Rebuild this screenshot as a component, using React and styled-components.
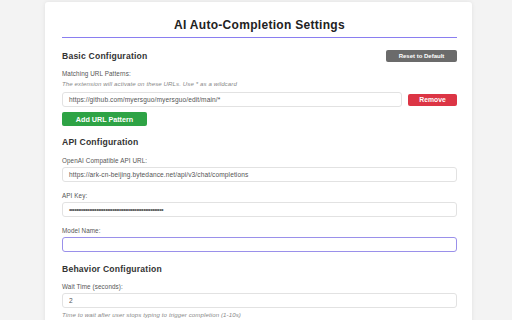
import React from 'react';
import styled, { createGlobalStyle } from 'styled-components';

const GlobalStyle = createGlobalStyle`
  html, body {
    margin: 0;
    padding: 0;
    background: #f3f3f3;
    font-family: "Liberation Sans", Arial, sans-serif;
    overflow: hidden;
  }
`;

const Page = styled.div`
  width: 512px;
  height: 320px;
  overflow: hidden;
  padding-top: 2px;
  box-sizing: border-box;
`;

const Card = styled.div`
  width: 427px;
  margin-left: 45px;
  background: #fff;
  box-shadow: 0 0 4px rgba(0, 0, 0, 0.08);
  border-radius: 3px;
  padding: 16px 15px 20px 17px;
  box-sizing: border-box;
  min-height: 330px;
`;

const Title = styled.h1`
  margin: 0;
  font-size: 12px;
  line-height: 14px;
  font-weight: 700;
  color: #222;
  text-align: center;
  padding-bottom: 5px;
  border-bottom: 1px solid #8a7ef0;
  letter-spacing: 0.3px;
`;

const Section = styled.section`
  margin-top: ${p => p.$top}px;
`;

const SectionHeader = styled.div`
  display: flex;
  align-items: center;
  justify-content: space-between;
  height: 12px;
`;

const Heading = styled.h2`
  margin: 0;
  font-size: 8.6px;
  line-height: 11px;
  font-weight: 700;
  color: #333;
  letter-spacing: 0.2px;
`;

const Label = styled.label`
  display: block;
  font-size: 6.3px;
  line-height: 8px;
  color: #555;
  letter-spacing: 0.1px;
  margin-top: ${p => p.$top}px;
`;

const Help = styled.div`
  font-size: 6.1px;
  line-height: 7px;
  font-style: italic;
  color: #888;
  letter-spacing: 0.1px;
  margin-top: ${p => p.$top || 2}px;
`;

const Row = styled.div`
  display: flex;
  align-items: center;
  gap: 6px;
  margin-top: 5px;
`;

const Input = styled.div`
  flex: 1;
  height: 15px;
  box-sizing: border-box;
  border: 1px solid ${p => (p.$focus ? '#9a90ea' : '#e2e2e2')};
  border-radius: 3px;
  background: #fff;
  display: flex;
  align-items: center;
  padding: 0 6px;
  font-size: 6.6px;
  color: #555;
  margin-top: ${p => p.$top || 0}px;
  white-space: nowrap;
  overflow: hidden;
  letter-spacing: ${p => (p.$dots ? '-0.5px' : '0.1px')};
`;

const Button = styled.button`
  border: none;
  border-radius: 2px;
  color: #fff;
  font-family: "Liberation Sans", Arial, sans-serif;
  font-weight: 700;
  font-size: ${p => p.$size || 6}px;
  padding: 0;
  height: ${p => p.$h}px;
  width: ${p => p.$w}px;
  background: ${p => p.$bg};
  cursor: pointer;
  margin-top: ${p => p.$top || 0}px;
  display: block;
`;

export default function App() {
  return (
    <>
      <GlobalStyle />
      <Page>
        <Card>
          <Title>AI Auto-Completion Settings</Title>

          <Section $top={12}>
            <SectionHeader>
              <Heading>Basic Configuration</Heading>
              <Button $bg="#6b6b6b" $w={71} $h={12} $size={6}>Reset to Default</Button>
            </SectionHeader>
            <Label $top={8}>Matching URL Patterns:</Label>
            <Help>The extension will activate on these URLs. Use * as a wildcard</Help>
            <Row>
              <Input>https://github.com/myersguo/myersguo/edit/main/*</Input>
              <Button $bg="#dc3545" $w={49} $h={12} $size={6.8}>Remove</Button>
            </Row>
            <Button $bg="#2ea345" $w={85} $h={14} $size={7.2} $top={5}>Add URL Pattern</Button>
          </Section>

          <Section $top={11}>
            <Heading>API Configuration</Heading>
            <Label $top={9}>OpenAI Compatible API URL:</Label>
            <Input $top={2}>https://ark-cn-beijing.bytedance.net/api/v3/chat/completions</Input>
            <Label $top={10}>API Key:</Label>
            <Input $top={2} $dots>••••••••••••••••••••••••••••••••••••••••••••••••••••</Input>
            <Label $top={10}>Model Name:</Label>
            <Input $top={2} $focus />
          </Section>

          <Section $top={12}>
            <Heading>Behavior Configuration</Heading>
            <Label $top={8}>Wait Time (seconds):</Label>
            <Input $top={2}>2</Input>
            <Help $top={3}>Time to wait after user stops typing to trigger completion (1-10s)</Help>
          </Section>
        </Card>
      </Page>
    </>
  );
}
